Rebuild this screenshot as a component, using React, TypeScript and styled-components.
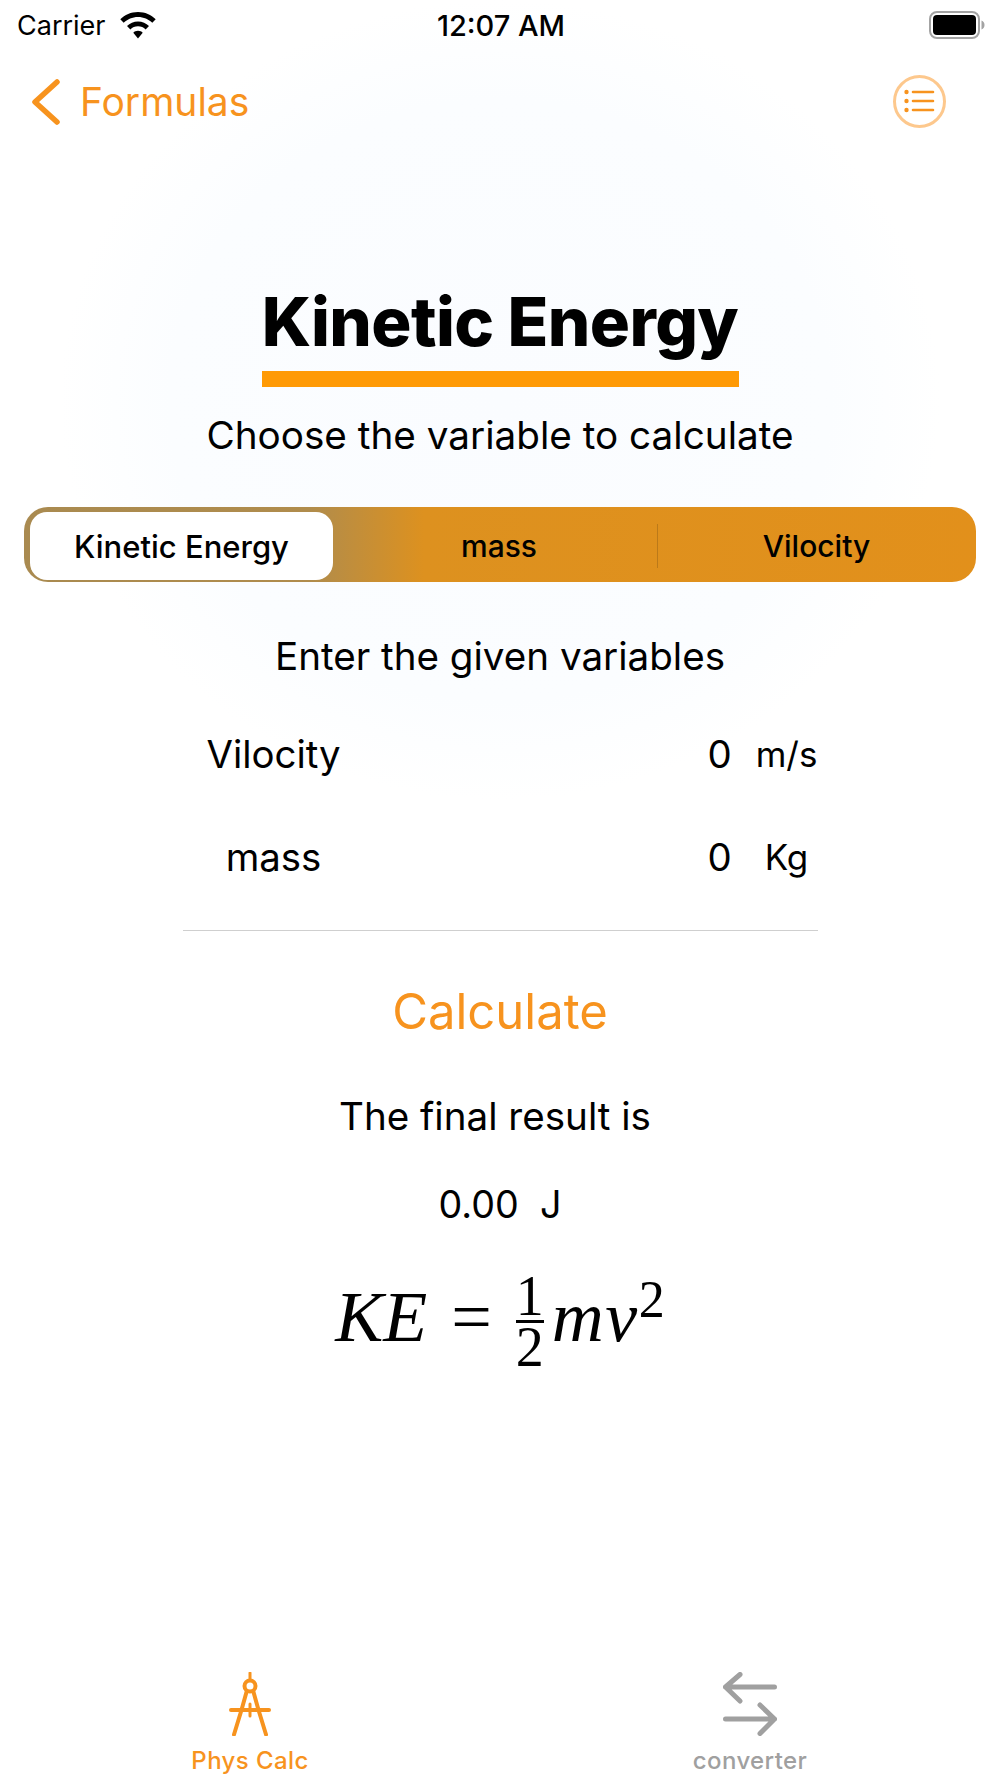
import React from "react";
import styled, { createGlobalStyle } from "styled-components";

const GlobalStyle = createGlobalStyle`
  html, body {
    margin: 0;
    padding: 0;
    background: #fff;
  }
  * {
    box-sizing: border-box;
  }
`;

const ORANGE = "#f7931e";

const Page = styled.div`
  width: 1000px;
  height: 1778px;
  display: flex;
  flex-direction: column;
  overflow: hidden;
  font-family: Inter, "Liberation Sans", sans-serif;
  color: #000;
  background: radial-gradient(ellipse 440px 400px at 500px 400px, #fafcff 0%, #fbfdff 75%, #ffffff 100%);
`;

const StatusBar = styled.div`
  height: 50px;
  padding: 0 15px 0 17px;
  display: grid;
  grid-template-columns: 1fr auto 1fr;
  align-items: center;
`;

const Carrier = styled.div`
  display: flex;
  align-items: center;
  gap: 14px;
  font-size: 27px;
`;

const Clock = styled.div`
  font-size: 29px;
  font-weight: 500;
`;

const BatteryWrap = styled.div`
  justify-self: end;
  display: flex;
`;

const NavBar = styled.div`
  height: 103px;
  padding: 0 54px 0 32px;
  display: flex;
  align-items: center;
  justify-content: space-between;
`;

const BackLink = styled.div`
  display: flex;
  align-items: center;
  gap: 20px;
  font-size: 39px;
  color: ${ORANGE};
`;

const Main = styled.main`
  flex: 1;
  display: flex;
  flex-direction: column;
  align-items: center;
`;

const Title = styled.h1`
  margin: 129px 0 0;
  font-size: 67px;
  line-height: 80px;
  font-weight: 800;
  letter-spacing: -0.6px;
`;

const Underline = styled.div`
  width: 477px;
  height: 16px;
  margin-top: 9px;
  background: #ff9a05;
`;

const Subtitle = styled.p`
  margin: 24px 0 0;
  font-size: 38.7px;
  line-height: 48px;
`;

const Segments = styled.div`
  width: 952px;
  height: 75px;
  margin-top: 48px;
  padding: 5px 0 2px 6px;
  display: grid;
  grid-template-columns: 303px 324px 1fr;
  align-items: stretch;
  border-radius: 24px;
  background: linear-gradient(90deg, #a98a50 0%, #b08c4c 30%, #dd911f 42%, #e2901b 100%);
`;

const Segment = styled.div<{ $active?: boolean; $divided?: boolean; $inset?: boolean }>`
  position: relative;
  display: flex;
  align-items: center;
  justify-content: center;
  padding-left: ${props => (props.$inset ? "8px" : "0")};
  font-size: ${props => (props.$active ? "31px" : "30px")};
  font-weight: 500;
  border-radius: 17px;
  background: ${props => (props.$active ? "#fff" : "transparent")};

  &::before {
    content: "";
    display: ${props => (props.$divided ? "block" : "none")};
    position: absolute;
    left: 0;
    top: 12px;
    bottom: 12px;
    width: 1px;
    background: rgba(120, 80, 20, 0.35);
  }
`;

const SectionLabel = styled.p`
  margin: 50px 0 0;
  font-size: 38.6px;
  line-height: 48px;
`;

const VariableList = styled.div`
  width: 635px;
  margin-top: 50px;
  padding-bottom: 49px;
  display: flex;
  flex-direction: column;
  gap: 55px;
  border-bottom: 1px solid #cfcfcf;
`;

const VariableRow = styled.div`
  display: grid;
  grid-template-columns: 182px 1fr 40px 62px;
  column-gap: 16px;
  align-items: center;
  font-size: 38.4px;
  line-height: 48px;
`;

const VariableName = styled.span`
  text-align: center;
`;

const VariableValue = styled.span`
  grid-column: 3;
  text-align: center;
`;

const VariableUnit = styled.span`
  text-align: center;
  font-size: 35px;
`;

const CalculateButton = styled.button`
  margin-top: 49px;
  border: 0;
  padding: 0;
  background: none;
  font-family: inherit;
  font-size: 49px;
  line-height: 64px;
  color: ${ORANGE};
`;

const ResultLabel = styled.p`
  margin: 48px 10px 0 0;
  font-size: 38.6px;
  line-height: 48px;
`;

const ResultValue = styled.p`
  margin: 40px 0 0;
  font-size: 37.7px;
  line-height: 48px;
  white-space: pre;
`;

const Formula = styled.div`
  margin-top: 36px;
  display: flex;
  align-items: center;
  font-family: "Liberation Serif", "Times New Roman", serif;
  font-size: 72px;
`;

const MathItalic = styled.span`
  font-style: italic;
`;

const MathEquals = styled.span`
  margin: 0 24px;
`;

const Fraction = styled.span`
  display: inline-flex;
  flex-direction: column;
  align-items: center;
  width: 28px;
  margin: 8px 8px 0 0;
  font-size: 56px;
  line-height: 48px;
`;

const Numerator = styled.span`
  width: 100%;
  text-align: center;
  border-bottom: 3px solid #000;
`;

const MathTerm = styled.span`
  font-style: italic;
  letter-spacing: 1.5px;
`;

const Sup = styled.sup`
  font-size: 52px;
  line-height: 0;
  font-style: normal;
  letter-spacing: 0;
  vertical-align: 24px;
`;

const TabBar = styled.nav`
  height: 115px;
  padding: 9px 0 0;
  display: grid;
  grid-template-columns: 1fr 1fr;
`;

const Tab = styled.div<{ $active?: boolean }>`
  display: flex;
  flex-direction: column;
  align-items: center;
  gap: 10px;
  font-size: 24px;
  font-weight: 500;
  letter-spacing: 0.4px;
  color: ${props => (props.$active ? ORANGE : "#a0a0a0")};
`;

const Wifi = () => (
  <svg width="36" height="27" viewBox="0 0 36 27" fill="#000">
    <path d="M18 0C11 0 4.800 2.800 0.300 7.300L3.700 10.800C7.300 7.100 12.400 4.900 18 4.900C23.600 4.900 28.700 7.100 32.300 10.800L35.700 7.300C31.200 2.800 25 0 18 0Z" />
    <path d="M18 9.500C13.700 9.500 9.800 11.200 7 14.100L10.400 17.500C12.400 15.500 15 14.300 18 14.300C21 14.300 23.600 15.500 25.600 17.500L29 14.100C26.200 11.200 22.300 9.500 18 9.500Z" />
    <path d="M18 18.800C16.100 18.800 14.500 19.500 13.300 20.700L18 26.500L22.700 20.700C21.500 19.500 19.900 18.800 18 18.800Z" />
  </svg>
);

const Battery = () => (
  <svg width="56" height="28" viewBox="0 0 56 28">
    <rect x="1" y="1" width="49" height="26" rx="7" fill="none" stroke="#a3a3a3" strokeWidth="2" />
    <rect x="4" y="4" width="43" height="20" rx="4" fill="#000" />
    <path d="M52.500 9.500C54.500 10.300 55.500 12 55.500 14C55.500 16 54.500 17.700 52.500 18.500Z" fill="#a3a3a3" />
  </svg>
);

const BackChevron = () => (
  <svg width="28" height="46" viewBox="0 0 28 46" fill="none" stroke={ORANGE} strokeWidth="5.500" strokeLinecap="round" strokeLinejoin="round">
    <path d="M25 3L3 23L25 43" />
  </svg>
);

const ListCircle = () => (
  <svg width="53" height="53" viewBox="0 0 53 53" fill="none" stroke={ORANGE}>
    <circle cx="26.500" cy="26.500" r="25" stroke="#fdc88d" strokeWidth="3" />
    <g strokeWidth="2.600" strokeLinecap="round">
      <path d="M20 17H40M20 26H40M20 35H40" />
    </g>
    <g fill={ORANGE} stroke="none">
      <circle cx="13.500" cy="17" r="2.200" />
      <circle cx="13.500" cy="26" r="2.200" />
      <circle cx="13.500" cy="35" r="2.200" />
    </g>
  </svg>
);

const Compass = () => (
  <svg width="42" height="64" viewBox="0 0 42 64" fill="none" stroke={ORANGE} strokeLinecap="round" strokeLinejoin="round">
    <path d="M21 1V7" strokeWidth="3" />
    <circle cx="21" cy="14" r="5.500" strokeWidth="4" />
    <path d="M17.500 20L12.500 38L5 62.500M24.500 20L29.500 38L37 62.500" strokeWidth="4" />
    <path d="M2 38H40" strokeWidth="4" />
    <path d="M21 32V44" strokeWidth="3" />
  </svg>
);

const SwapArrows = () => (
  <svg width="54" height="64" viewBox="0 0 54 64" fill="none" stroke="#a0a0a0" strokeWidth="5" strokeLinecap="round" strokeLinejoin="round">
    <path d="M51.500 15H2.500M17 2.500L2.500 15L17 29" />
    <path d="M2.500 47H51.500M37 33L51.500 47L37 61.500" />
  </svg>
);

const App: React.FC = () => {
  return (
    <Page>
      <GlobalStyle />
      <StatusBar>
        <Carrier>
          Carrier
          <Wifi />
        </Carrier>
        <Clock>12:07 AM</Clock>
        <BatteryWrap>
          <Battery />
        </BatteryWrap>
      </StatusBar>
      <NavBar>
        <BackLink>
          <BackChevron />
          Formulas
        </BackLink>
        <ListCircle />
      </NavBar>
      <Main>
        <Title>Kinetic Energy</Title>
        <Underline />
        <Subtitle>Choose the variable to calculate</Subtitle>
        <Segments>
          <Segment $active>Kinetic Energy</Segment>
          <Segment $inset>mass</Segment>
          <Segment $divided>Vilocity</Segment>
        </Segments>
        <SectionLabel>Enter the given variables</SectionLabel>
        <VariableList>
          <VariableRow>
            <VariableName>Vilocity</VariableName>
            <VariableValue>0</VariableValue>
            <VariableUnit>m/s</VariableUnit>
          </VariableRow>
          <VariableRow>
            <VariableName>mass</VariableName>
            <VariableValue>0</VariableValue>
            <VariableUnit>Kg</VariableUnit>
          </VariableRow>
        </VariableList>
        <CalculateButton>Calculate</CalculateButton>
        <ResultLabel>The final result is</ResultLabel>
        <ResultValue>0.00  J</ResultValue>
        <Formula>
          <MathItalic>KE</MathItalic>
          <MathEquals>=</MathEquals>
          <Fraction>
            <Numerator>1</Numerator>
            <span>2</span>
          </Fraction>
          <MathTerm>
            mv<Sup>2</Sup>
          </MathTerm>
        </Formula>
      </Main>
      <TabBar>
        <Tab $active>
          <Compass />
          Phys Calc
        </Tab>
        <Tab>
          <SwapArrows />
          converter
        </Tab>
      </TabBar>
    </Page>
  );
};

export default App;
